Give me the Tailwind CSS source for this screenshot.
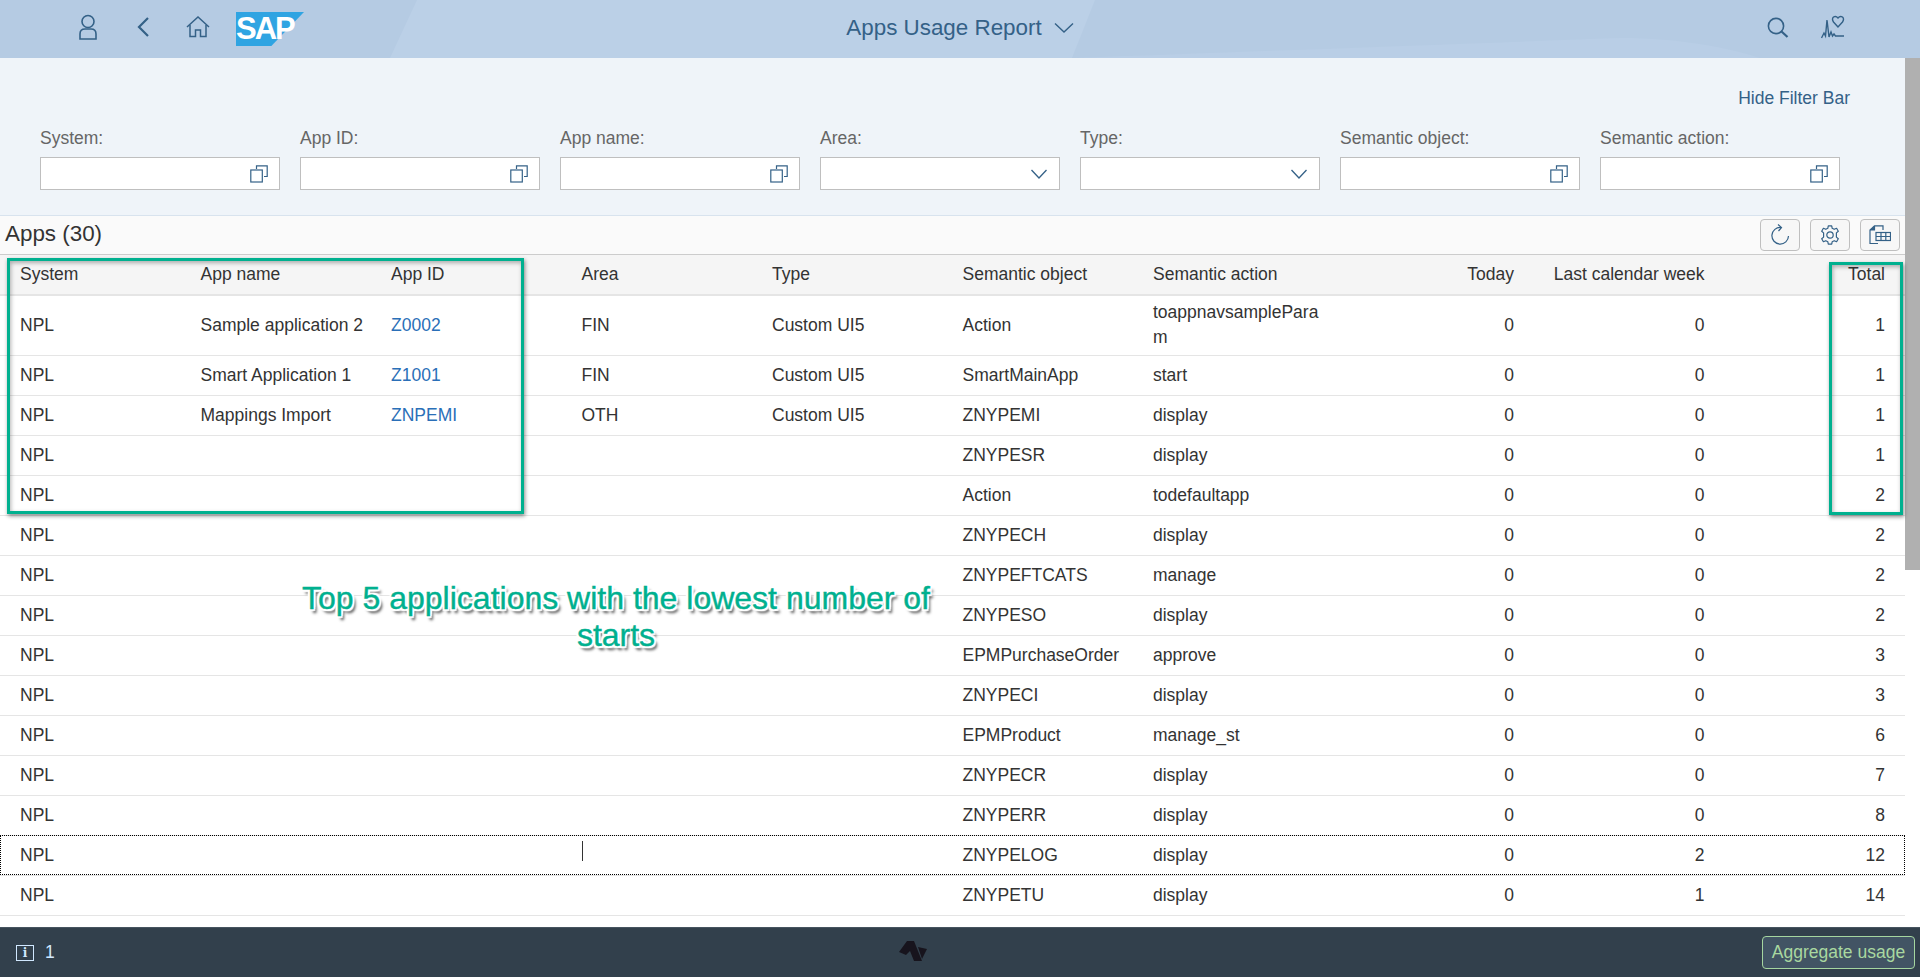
<!DOCTYPE html>
<html lang="en">
<head>
  <meta charset="utf-8" />
  <title>Apps Usage Report</title>
  <script src="https://cdn.jsdelivr.net/npm/@tailwindcss/browser@4"></script>
</head>
<body class="relative h-screen overflow-hidden flex flex-col bg-white text-[17.5px] text-[#333] font-['Liberation_Sans',Arial,sans-serif]">

  <!-- Shell header -->
  <header class="relative h-[58px] shrink-0 bg-[#b5cbe3] text-[#346187] overflow-hidden">
    <svg class="absolute inset-0" width="1920" height="58" aria-hidden="true">
      <path d="M390 58 L417 0 H1095 L1072 58 Z" fill="#bbd0e7" />
      <path d="M1072 58 C1300 50 1450 44 1620 38 C1680 38 1730 48 1760 58 Z" fill="#b9cee6" />
    </svg>
    <div class="relative h-full flex items-center">
      <svg class="absolute left-[78px] top-[14px]" width="20" height="26" viewBox="0 0 20 26" fill="none" stroke="#346187" stroke-width="1.6">
        <circle cx="10" cy="7.5" r="6" />
        <path d="M2 25 V20 Q2 15 7 15 H13 Q18 15 18 20 V25 Z" />
      </svg>
      <svg class="absolute left-[136px] top-[16px]" width="14" height="22" viewBox="0 0 14 22" fill="none" stroke="#346187" stroke-width="2.2">
        <path d="M12 2 L3 11 L12 20" />
      </svg>
      <svg class="absolute left-[186px] top-[16px]" width="24" height="22" viewBox="0 0 24 22" fill="none" stroke="#346187" stroke-width="1.5">
        <path d="M1 11 L12 1 L23 11" />
        <path d="M4 9 V20.5 H9.5 V14 H14.5 V20.5 H20 V9" />
      </svg>
      <!-- SAP logo -->
      <div class="absolute left-[236px] top-[12px] w-[68px] h-[34px] bg-[#2fa4e2] [clip-path:polygon(0_0,100%_0,52%_100%,0_100%)]"></div>
      <span class="absolute left-[236px] top-[12px] w-[50px] h-[34px] leading-[34px] text-center text-white font-bold text-[31px] tracking-[-2px]">SAP</span>

      <div class="mx-auto flex items-center gap-[12px] -translate-y-[1px]">
        <span class="text-[22.4px] leading-none">Apps Usage Report</span>
        <svg width="20" height="12" viewBox="0 0 20 12" fill="none" stroke="#346187" stroke-width="1.4">
          <path d="M1 1.5 L10 10 L19 1.5" />
        </svg>
      </div>

      <svg class="absolute left-[1767px] top-[17px]" width="22" height="21" viewBox="0 0 22 21" fill="none" stroke="#346187" stroke-width="1.6">
        <circle cx="9" cy="9" r="7.6" />
        <path d="M14.5 14.5 L20.5 20" stroke-width="2.2" />
      </svg>
      <svg class="absolute left-[1821px] top-[15px]" width="24" height="24" viewBox="0 0 24 24" fill="none" stroke="#346187" stroke-width="1.4">
        <path d="M0.5 23 L3 18 L4.5 21 L6 5 L8 22 L10 17 L11.5 21 L13 19 L14.5 21 H23" />
        <path d="M17 12 L12.5 7 Q10.5 4 12.5 2 Q15 0.5 17 3 Q19 0.5 21.5 2 Q23.5 4 21.5 7 Z" />
      </svg>
    </div>
  </header>

  <!-- Filter bar -->
  <section class="h-[157px] shrink-0 bg-[#eff4f9] px-[40px]">
    <div class="flex justify-end pr-[30px] pt-[30px] leading-[20px] text-[#346187]">Hide Filter Bar</div>
    <div class="flex gap-[20px] mt-[20px]">
      <div class="w-[240px]">
        <label class="block h-[29px] leading-[20px] text-[#666]">System:</label>
        <div class="h-[33px] bg-white border border-[#bfbfbf] flex items-center justify-end pr-[11px]">
          <svg width="18" height="18" viewBox="0 0 18 18" fill="none" stroke="#346187" stroke-width="1.2"><path d="M6.5 4 V0.8 H17.2 V11.5 H14" /><rect x="0.8" y="5" width="11.5" height="12" /></svg>
        </div>
      </div>
      <div class="w-[240px]">
        <label class="block h-[29px] leading-[20px] text-[#666]">App ID:</label>
        <div class="h-[33px] bg-white border border-[#bfbfbf] flex items-center justify-end pr-[11px]">
          <svg width="18" height="18" viewBox="0 0 18 18" fill="none" stroke="#346187" stroke-width="1.2"><path d="M6.5 4 V0.8 H17.2 V11.5 H14" /><rect x="0.8" y="5" width="11.5" height="12" /></svg>
        </div>
      </div>
      <div class="w-[240px]">
        <label class="block h-[29px] leading-[20px] text-[#666]">App name:</label>
        <div class="h-[33px] bg-white border border-[#bfbfbf] flex items-center justify-end pr-[11px]">
          <svg width="18" height="18" viewBox="0 0 18 18" fill="none" stroke="#346187" stroke-width="1.2"><path d="M6.5 4 V0.8 H17.2 V11.5 H14" /><rect x="0.8" y="5" width="11.5" height="12" /></svg>
        </div>
      </div>
      <div class="w-[240px]">
        <label class="block h-[29px] leading-[20px] text-[#666]">Area:</label>
        <div class="h-[33px] bg-white border border-[#bfbfbf] flex items-center justify-end pr-[12px]">
          <svg width="16" height="10" viewBox="0 0 16 10" fill="none" stroke="#346187" stroke-width="1.3"><path d="M0.5 1 L8 9 L15.5 1" /></svg>
        </div>
      </div>
      <div class="w-[240px]">
        <label class="block h-[29px] leading-[20px] text-[#666]">Type:</label>
        <div class="h-[33px] bg-white border border-[#bfbfbf] flex items-center justify-end pr-[12px]">
          <svg width="16" height="10" viewBox="0 0 16 10" fill="none" stroke="#346187" stroke-width="1.3"><path d="M0.5 1 L8 9 L15.5 1" /></svg>
        </div>
      </div>
      <div class="w-[240px]">
        <label class="block h-[29px] leading-[20px] text-[#666]">Semantic object:</label>
        <div class="h-[33px] bg-white border border-[#bfbfbf] flex items-center justify-end pr-[11px]">
          <svg width="18" height="18" viewBox="0 0 18 18" fill="none" stroke="#346187" stroke-width="1.2"><path d="M6.5 4 V0.8 H17.2 V11.5 H14" /><rect x="0.8" y="5" width="11.5" height="12" /></svg>
        </div>
      </div>
      <div class="w-[240px]">
        <label class="block h-[29px] leading-[20px] text-[#666]">Semantic action:</label>
        <div class="h-[33px] bg-white border border-[#bfbfbf] flex items-center justify-end pr-[11px]">
          <svg width="18" height="18" viewBox="0 0 18 18" fill="none" stroke="#346187" stroke-width="1.2"><path d="M6.5 4 V0.8 H17.2 V11.5 H14" /><rect x="0.8" y="5" width="11.5" height="12" /></svg>
        </div>
      </div>
    </div>
  </section>

  <div class="flex-1 min-h-0 flex">
    <main class="w-[1905px] shrink-0">
      <!-- Table toolbar -->
      <div class="h-[40px] bg-[#fafafa] border-t border-b border-t-[#d8e3ee] border-b-[#cccccc] flex items-center pl-[5px] pr-[5px]">
        <h2 class="text-[22.4px] leading-none mr-auto -translate-y-[1px]">Apps (30)</h2>
        <div class="flex gap-[10px]">
          <button class="w-[40px] h-[32px] bg-[#f7f7f7] border border-[#bfbfbf] rounded-[4px] flex items-center justify-center">
            <svg width="20" height="22" viewBox="0 0 20 22" fill="none" stroke="#346187" stroke-width="1.2"><path d="M11 3.5 A8.3 8.3 0 1 0 18.5 12" /><path d="M8 0.5 L11.5 3.5 L8.5 7" /></svg>
          </button>
          <button class="w-[40px] h-[32px] bg-[#f7f7f7] border border-[#bfbfbf] rounded-[4px] flex items-center justify-center">
            <svg width="20" height="20" viewBox="0 0 20 20" fill="none" stroke="#346187" stroke-width="1.2"><circle cx="10" cy="10" r="3.2" /><path d="M8.3 .8 H11.7 L12.2 3.3 L14.2 4.3 L16.6 3.3 L18.3 6.2 L16.4 7.9 V12.1 L18.3 13.8 L16.6 16.7 L14.2 15.7 L12.2 16.7 L11.7 19.2 H8.3 L7.8 16.7 L5.8 15.7 L3.4 16.7 L1.7 13.8 L3.6 12.1 V7.9 L1.7 6.2 L3.4 3.3 L5.8 4.3 L7.8 3.3 Z" stroke-linejoin="round" /></svg>
          </button>
          <button class="w-[40px] h-[32px] bg-[#f7f7f7] border border-[#bfbfbf] rounded-[4px] flex items-center justify-center">
            <svg width="22" height="20" viewBox="0 0 22 20" fill="none" stroke="#346187" stroke-width="1.2"><path d="M9 18.5 H1 V5 L5.5 .8 H14 V5" /><path d="M1 5 H5.5 V1" fill="#346187" /><rect x="7" y="7.5" width="14.5" height="8" /><path d="M7 11.5 H21.5 M12 7.5 V15.5 M16.8 7.5 V15.5" /></svg>
          </button>
        </div>
      </div>

      <!-- Usage table -->
      <table class="w-[1905px] table-fixed [&_th]:font-normal [&_th]:text-left [&_th]:align-middle [&_th]:pl-[10px] [&_th]:pr-[10px] [&_td]:align-middle [&_td]:pl-[10px] [&_td]:pr-[10px] [&_td]:h-[40px] [&_td]:leading-[25px] [&_td]:border-b [&_td]:border-[#e5e5e5] [&_td]:break-words [&_td:first-child]:pl-[20px] [&_th:first-child]:pl-[20px] [&_td:nth-child(n+8)]:text-right [&_th:nth-child(n+8)]:text-right [&_td:last-child]:pr-[20px] [&_th:last-child]:pr-[20px]">
        <thead>
          <tr class="h-[40px] bg-[#f5f5f5] border-b-2 border-[#e5e5e5]">
            <th>System</th><th>App name</th><th>App ID</th><th>Area</th><th>Type</th><th>Semantic object</th><th>Semantic action</th><th>Today</th><th class="whitespace-nowrap">Last calendar week</th><th>Total</th>
          </tr>
        </thead>
        <tbody>
          <tr class="h-[60px]"><td>NPL</td><td>Sample application 2</td><td><a href="#" class="text-[#2a6fb8]">Z0002</a></td><td>FIN</td><td>Custom UI5</td><td>Action</td><td class="break-all">toappnavsampleParam</td><td>0</td><td>0</td><td>1</td></tr>
          <tr><td>NPL</td><td>Smart Application 1</td><td><a href="#" class="text-[#2a6fb8]">Z1001</a></td><td>FIN</td><td>Custom UI5</td><td>SmartMainApp</td><td>start</td><td>0</td><td>0</td><td>1</td></tr>
          <tr><td>NPL</td><td>Mappings Import</td><td><a href="#" class="text-[#2a6fb8]">ZNPEMI</a></td><td>OTH</td><td>Custom UI5</td><td>ZNYPEMI</td><td>display</td><td>0</td><td>0</td><td>1</td></tr>
          <tr><td>NPL</td><td></td><td></td><td></td><td></td><td>ZNYPESR</td><td>display</td><td>0</td><td>0</td><td>1</td></tr>
          <tr><td>NPL</td><td></td><td></td><td></td><td></td><td>Action</td><td>todefaultapp</td><td>0</td><td>0</td><td>2</td></tr>
          <tr><td>NPL</td><td></td><td></td><td></td><td></td><td>ZNYPECH</td><td>display</td><td>0</td><td>0</td><td>2</td></tr>
          <tr><td>NPL</td><td></td><td></td><td></td><td></td><td>ZNYPEFTCATS</td><td>manage</td><td>0</td><td>0</td><td>2</td></tr>
          <tr><td>NPL</td><td></td><td></td><td></td><td></td><td>ZNYPESO</td><td>display</td><td>0</td><td>0</td><td>2</td></tr>
          <tr><td>NPL</td><td></td><td></td><td></td><td></td><td>EPMPurchaseOrder</td><td>approve</td><td>0</td><td>0</td><td>3</td></tr>
          <tr><td>NPL</td><td></td><td></td><td></td><td></td><td>ZNYPECI</td><td>display</td><td>0</td><td>0</td><td>3</td></tr>
          <tr><td>NPL</td><td></td><td></td><td></td><td></td><td>EPMProduct</td><td>manage_st</td><td>0</td><td>0</td><td>6</td></tr>
          <tr><td>NPL</td><td></td><td></td><td></td><td></td><td>ZNYPECR</td><td>display</td><td>0</td><td>0</td><td>7</td></tr>
          <tr><td>NPL</td><td></td><td></td><td></td><td></td><td>ZNYPERR</td><td>display</td><td>0</td><td>0</td><td>8</td></tr>
          <tr class="outline outline-dotted outline-black -outline-offset-1"><td>NPL</td><td></td><td></td><td><span class="block w-px h-[20px] bg-[#333] -mt-[8px]"></span></td><td></td><td>ZNYPELOG</td><td>display</td><td>0</td><td>2</td><td>12</td></tr>
          <tr><td>NPL</td><td></td><td></td><td></td><td></td><td>ZNYPETU</td><td>display</td><td>0</td><td>1</td><td>14</td></tr>
        </tbody>
      </table>
    </main>

    <!-- Scrollbar -->
    <div class="w-[15px] bg-white">
      <div class="relative h-[512px] -mt-[157px] bg-[#b0b0b0]"></div>
    </div>
  </div>

  <!-- Footer -->
  <footer class="relative h-[50px] shrink-0 bg-[#32404c] border-t border-[#46545f] flex items-center pl-[16px]">
    <span class="w-[18px] h-[16px] border border-[#d1e8ff] text-[#d1e8ff] text-[12px] font-bold leading-[14px] text-center font-['DejaVu_Serif',serif]">i</span>
    <span class="ml-[11px] text-[#d1e8ff]">1</span>
    <svg class="absolute left-[899px] top-[12px]" width="28" height="22" viewBox="0 0 28 22" fill="#17141d">
      <path d="M0 12 L8 1 H15 L23 21 H15 L11 11 L7 15 Z" />
      <path d="M19 7 L28 9 L23 19 Z" />
    </svg>
    <button class="absolute left-[1762px] top-[8px] w-[153px] h-[33px] bg-[#425464] border border-[#a5d6a0] rounded-[4px] text-[#a9d8a0]">Aggregate usage</button>
  </footer>

  <!-- Annotation overlay -->
  <div class="absolute left-[7px] top-[258px] w-[517px] h-[256px] border-[3px] border-[#00b08f] shadow-[1px_2px_4px_rgba(0,0,0,0.45),inset_1px_2px_4px_rgba(0,0,0,0.3)]"></div>
  <div class="absolute left-[1829px] top-[262px] w-[74px] h-[253px] border-[3px] border-[#00b08f] shadow-[1px_2px_4px_rgba(0,0,0,0.45),inset_1px_2px_4px_rgba(0,0,0,0.3)]"></div>
  <div class="absolute left-[266px] top-[580px] w-[700px] text-center text-[32px] leading-[37px] text-[#00b08f] [-webkit-text-stroke:0.4px_#00b08f] [text-shadow:0_0_2px_#fff,2px_2px_1px_#fff,-2px_-2px_1px_#fff,2px_-2px_1px_#fff,-2px_2px_1px_#fff,2px_0_1px_#fff,-2px_0_1px_#fff,0_2px_1px_#fff,0_-2px_1px_#fff,3px_4px_3px_rgba(0,0,0,0.75)]">Top 5 applications with the lowest number of starts</div>
</body>
</html>
